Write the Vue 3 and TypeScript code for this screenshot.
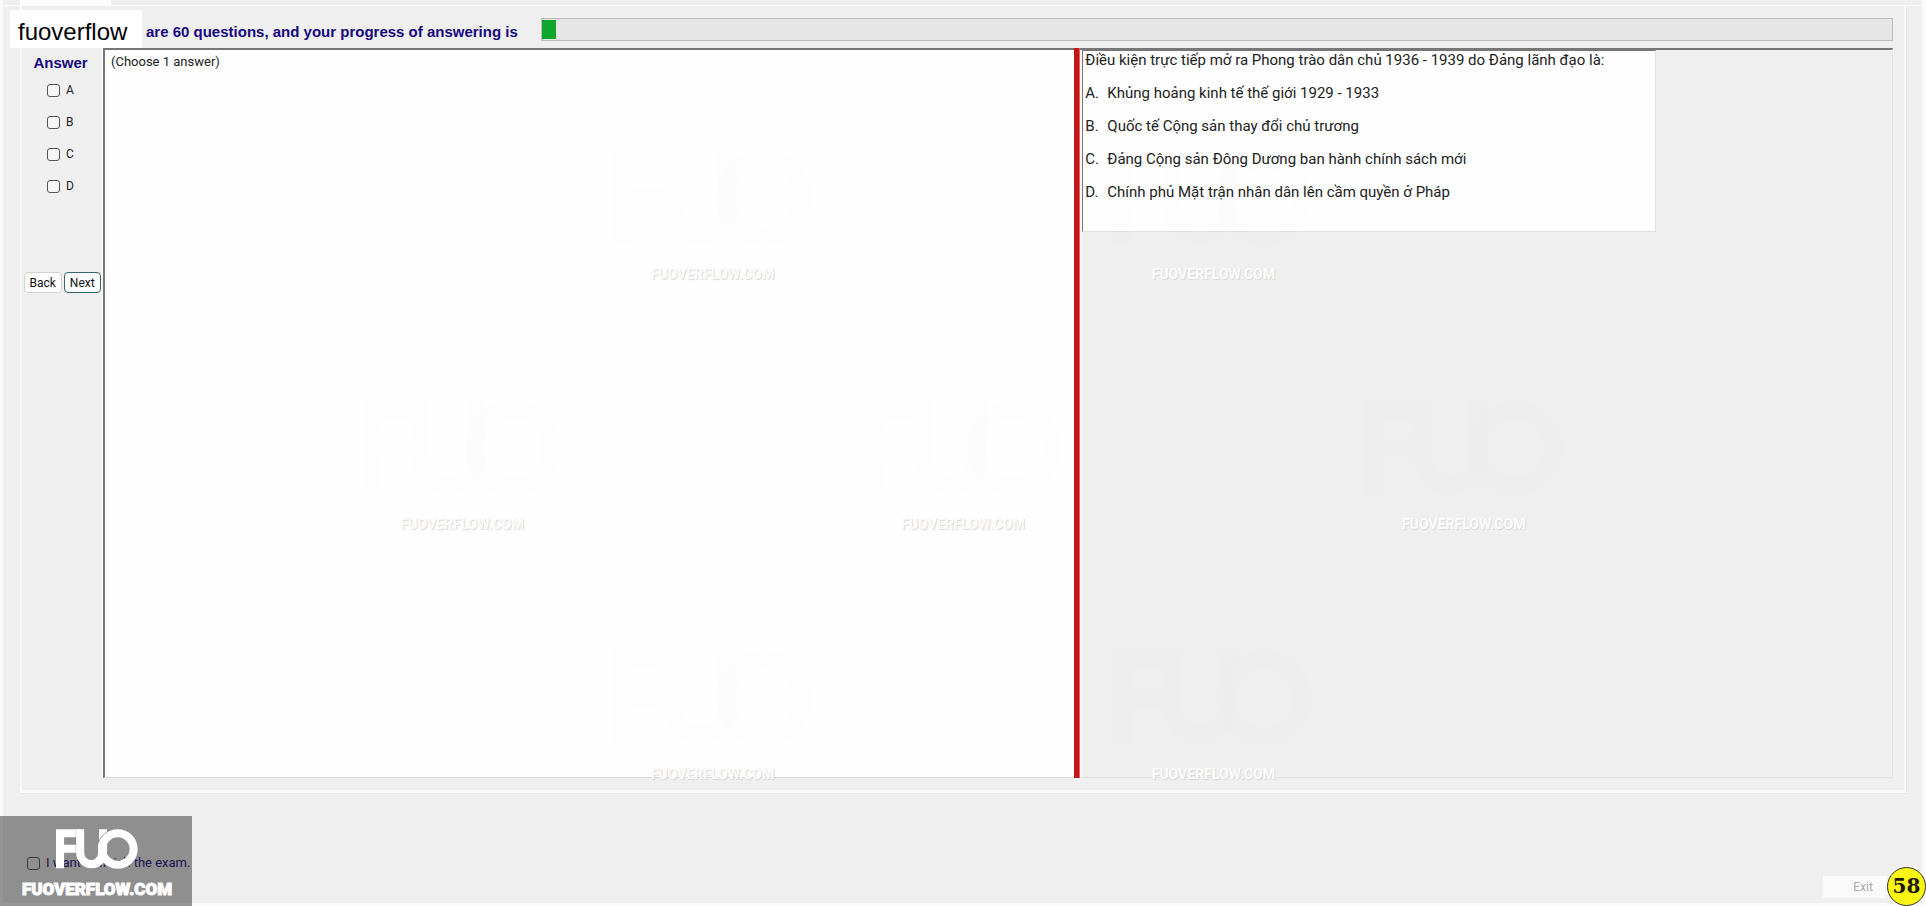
<script setup lang="ts">
import { ref } from 'vue'

const total = 60
const done = ref(1)
const choices = ['A', 'B', 'C', 'D']
const picked = ref<string[]>([])
const finish = ref(false)

const question = 'Điều kiện trực tiếp mở ra Phong trào dân chủ 1936 - 1939 do Đảng lãnh đạo là:'
const options = [
  { key: 'A', text: 'Khủng hoảng kinh tế thế giới 1929 - 1933' },
  { key: 'B', text: 'Quốc tế Cộng sản thay đổi chủ trương' },
  { key: 'C', text: 'Đảng Cộng sản Đông Dương ban hành chính sách mới' },
  { key: 'D', text: 'Chính phủ Mặt trận nhân dân lên cầm quyền ở Pháp' },
]

// Watermark centres, in percent of the window
const marks = [
  { x: 37, y: 30 },
  { x: 63, y: 30 },
  { x: 24, y: 57.6 },
  { x: 50, y: 57.6 },
  { x: 76, y: 57.6 },
  { x: 37, y: 85.2 },
  { x: 63, y: 85.2 },
]
</script>

<template>
  <div class="page">
    <div class="tabs"><div class="tab"></div></div>
    <main class="frame">
      <header class="top">
        <div class="brand">fuoverflow</div>
        <p class="status">are {{ total }} questions, and your progress of answering is</p>
        <div class="bar" role="progressbar" :aria-valuenow="done" :aria-valuemax="total" aria-label="Progress">
          <div class="fill" :style="{ width: (done / total) * 62 + '%' }"></div>
        </div>
      </header>
      <div class="work">
        <aside class="side">
          <h2>Answer</h2>
          <label v-for="c in choices" :key="c" class="choice">
            <input v-model="picked" type="checkbox" :value="c" />{{ c }}
          </label>
          <div class="nav">
            <button type="button">Back</button>
            <button type="button" class="next">Next</button>
          </div>
        </aside>
        <section class="left">(Choose 1 answer)</section>
        <div class="split"></div>
        <section class="right">
          <div class="question">
            <p>{{ question }}</p>
            <p v-for="o in options" :key="o.key"><span class="key">{{ o.key }}.</span>{{ o.text }}</p>
          </div>
        </section>
      </div>
    </main>
    <footer class="foot">
      <label class="finish"><input v-model="finish" type="checkbox" />I want to finish the exam.</label>
      <div class="exitbox">
        <button type="button" class="exit" disabled>Exit</button>
        <div class="count">58</div>
      </div>
      <div class="logo">
        <svg viewBox="172 207 244 118" aria-hidden="true">
          <path d="M184 323V219H244M184 265H234" fill="none" stroke="#fff" stroke-width="24" />
          <path d="M232 207V277" stroke="#8e8e8e" stroke-width="2" />
          <path d="M244 207V277A34 34 0 0 0 312 277V207" fill="none" stroke="#fff" stroke-width="24" />
          <circle cx="356" cy="266" r="60" fill="none" stroke="#8e8e8e" stroke-width="3" />
          <circle cx="356" cy="266" r="47" fill="none" stroke="#fff" stroke-width="24" />
          <path d="M309 250V277A34 34 0 0 1 290 308" fill="none" stroke="#fff" stroke-width="24" />
        </svg>
        <strong>FUOVERFLOW.COM</strong>
      </div>
    </footer>
    <div class="marks" aria-hidden="true">
      <div v-for="(m, i) in marks" :key="i" class="mark" :style="{ left: m.x + '%', top: m.y + '%' }">
        <svg viewBox="172 207 244 118">
          <path d="M184 323V219H244M184 265H234M244 207V277A34 34 0 0 0 312 277V207" />
          <circle cx="356" cy="266" r="47" />
        </svg>
        <span>FUOVERFLOW.COM</span>
      </div>
    </div>
  </div>
</template>

<style>
body { margin: 0; }
</style>

<style scoped>
* { box-sizing: border-box; }
.page {
  position: relative;
  display: flex;
  flex-direction: column;
  min-height: 100vh;
  overflow: hidden;
  background: #efefef;
  box-shadow: inset 3px 0 0 #fafafa, inset -4px -3px 0 #fafafa;
  font-family: Roboto, "Liberation Sans", sans-serif;
  font-size: 15px;
  color: #222;
}
p, h2 { margin: 0; }
input {
  appearance: none;
  flex: none;
  width: 13px;
  height: 13px;
  margin: 0;
  border: 1px solid #555;
  border-radius: 3px;
  background: #f5f5f5;
}
input:checked { background: #00628b; }
.finish input { background: transparent; }
.tabs { height: 6px; padding-left: 20px; border-bottom: 1px solid #fafafa; }
.tab { width: 91px; height: 6px; background: #fcfcfc; }
.frame {
  flex: 1;
  display: flex;
  flex-direction: column;
  margin: 0 20px;
  padding: 0 11px 12px 0;
  border: solid #f9f9f9;
  border-width: 0 2px 3px 2px;
  box-shadow: 1px 1px 0 #e6e6e6;
}
.top { display: flex; align-items: center; height: 42px; }
.brand {
  position: relative;
  z-index: 1;
  align-self: flex-end;
  width: 132px;
  height: 38px;
  margin-left: -12px;
  padding-left: 8px;
  background: #fff;
  color: #000;
  font-family: "Liberation Sans", Arial, sans-serif;
  font-size: 24px;
  line-height: 43px;
}
.status {
  margin: 10px 23px 0 4px;
  color: #16087e;
  font: bold 15px/20px "Liberation Sans", Arial, sans-serif;
  white-space: nowrap;
}
.bar { flex: 1; height: 23px; margin-top: 4px; padding: 1px 0; border: 1px solid #bcbcbc; background: #e6e6e6; }
.fill { height: 100%; background: #10a62b; }
.work { flex: 1; display: flex; }
.side { width: 81px; padding-top: 5px; border-right: 2px solid #f8f8f8; }
.side h2 { padding-right: 2px; color: #16087e; font: bold 15px/20px "Liberation Sans", Arial, sans-serif; text-align: center; }
.choice { display: flex; align-items: center; gap: 6px; height: 32px; padding-left: 25px; font-size: 12px; }
.side h2 + .choice { margin-top: 1px; }
.nav { display: flex; gap: 2px; margin-top: 70px; padding-left: 2px; }
.nav button {
  width: 38px;
  height: 21px;
  padding: 0;
  border: 1px solid #d2d2d2;
  border-radius: 4px;
  background: #fcfcfc;
  font: 12px Roboto, "Liberation Sans", sans-serif;
  color: #111;
}
.nav .next { border-color: #37676e; }
.left {
  flex: 966;
  padding: 3px 6px;
  border-top: 2px solid #777;
  border-left: 2px solid #777;
  border-bottom: 1px solid #dcdcdc;
  background: #fefefe;
  font-size: 13px;
  line-height: 18px;
}
.split { width: 6px; background: #c41616; border-right: 1px solid #d66; }
.right {
  flex: 817;
  padding-left: 2px;
  border: solid #e2e2e2;
  border-width: 2px 1px 1px 0;
  border-top-color: #777;
  box-shadow: inset 2px 0 0 #f9f9f9;
}
.question {
  width: 574px;
  max-width: 100%;
  height: 182px;
  padding-left: 2px;
  border: 1px solid #e0e0e0;
  border-top: 1px solid #777;
  border-left: 1px solid #777;
  background: #fefefe;
}
.question p { height: 33px; line-height: 19px; white-space: nowrap; }
.key { display: inline-block; width: 22px; }
.foot { position: relative; display: flex; align-items: flex-end; justify-content: space-between; height: 113px; }
.finish { display: flex; align-items: center; gap: 6px; margin-bottom: 33px; padding-left: 27px; color: #16087e; font-size: 13px; line-height: 20px; }
.exitbox { display: flex; align-items: center; }
.exit {
  width: 64px;
  height: 22px;
  padding: 0 0 0 16px;
  border: 0;
  background: #fafafa;
  color: #aaa;
  font: 12px Roboto, "Liberation Sans", sans-serif;
}
.count {
  width: 39px;
  height: 39px;
  border: 1px solid #333;
  border-radius: 50%;
  background: #fbf513;
  box-shadow: 0 0 0 1px #fafafa;
  color: #1c1808;
  font: bold 20px/37px "DejaVu Serif", serif;
  text-align: center;
}
.logo {
  position: absolute;
  left: 0;
  bottom: 0;
  display: flex;
  flex-direction: column;
  align-items: center;
  width: 192px;
  height: 90px;
  padding: 13px 0 0 2px;
  background: rgba(30, 30, 30, 0.46);
}
.logo svg { width: 82px; height: 40px; }
.logo strong {
  margin-top: 8px;
  color: #fff;
  font: 900 17px/24px Roboto, sans-serif;
  -webkit-text-stroke: 1px #fff;
}
.marks { position: absolute; inset: 0; overflow: hidden; pointer-events: none; }
.mark { position: absolute; display: flex; flex-direction: column; align-items: center; width: 200px; margin: -129px 0 0 -100px; }
.mark svg { width: 200px; height: 110px; fill: none; stroke: rgba(0, 0, 0, 0.005); stroke-width: 24; }
.mark span { margin-top: 14px; color: #fbfbfb; font-size: 14px; font-weight: bold; line-height: 14px; text-shadow: 1px 1px 1px #d8d8d8; }
</style>
